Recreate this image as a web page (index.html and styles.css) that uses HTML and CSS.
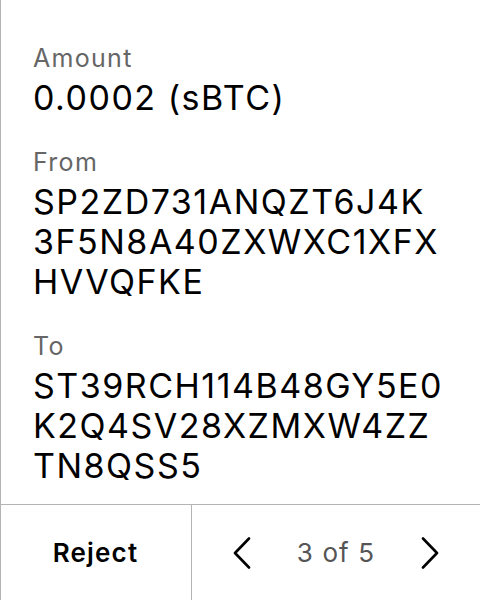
FILE: index.html
```html
<!DOCTYPE html>
<html>
<head>
<meta charset="utf-8">
<link rel="stylesheet" href="styles.css">
</head>
<body>
<div class="screen">
  <div class="content">
    <div class="field">
      <div class="label">Amount</div>
      <div class="value">0.0002 (sBTC)</div>
    </div>
    <div class="field">
      <div class="label">From</div>
      <div class="value">SP2ZD731ANQZT6J4K<br>3F5N8A40ZXWXC1XFX<br>HVVQFKE</div>
    </div>
    <div class="field">
      <div class="label">To</div>
      <div class="value">ST39RCH114B48GY5E0<br>K2Q4SV28XZMXW4ZZ<br>TN8QSS5</div>
    </div>
  </div>
  <div class="footer">
    <div class="reject">Reject</div>
    <div class="pager">
      <svg class="chev" width="18" height="32" viewBox="0 0 18 32"><path d="M16 1.5 L2 16 L16 30.5" fill="none" stroke="#000" stroke-width="2.6" stroke-linecap="round" stroke-linejoin="round"/></svg>
      <span class="count">3 of 5</span>
      <svg class="chev" width="18" height="32" viewBox="0 0 18 32"><path d="M2 1.5 L16 16 L2 30.5" fill="none" stroke="#000" stroke-width="2.6" stroke-linecap="round" stroke-linejoin="round"/></svg>
    </div>
  </div>
</div>
</body>
</html>
```

FILE: styles.css
```css
html, body {
  margin: 0;
  padding: 0;
  background: #fff;
}
body {
  font-family: Inter, "Noto Sans", sans-serif;
  color: #000;
}
.screen {
  width: 480px;
  height: 600px;
  display: flex;
  flex-direction: column;
  border-left: 1px solid #b4b4b4;
  box-sizing: border-box;
}
.content {
  flex: 1;
  padding: 42px 0 0 32px;
  display: flex;
  flex-direction: column;
  gap: 28px;
}
.field {
  display: flex;
  flex-direction: column;
  gap: 4px;
}
.label {
  font-size: 25px;
  line-height: 32px;
  letter-spacing: 1.3px;
  color: #666;
}
.value {
  font-size: 34px;
  line-height: 40px;
  letter-spacing: 1.5px;
}
.footer {
  height: 95px;
  border-top: 1px solid #b4b4b4;
  display: flex;
  margin-left: -1px;
}
.reject {
  width: 191px;
  border-right: 1px solid #b4b4b4;
  display: flex;
  align-items: center;
  justify-content: center;
  font-size: 26px;
  font-weight: 600;
  letter-spacing: 1.2px;
}
.pager {
  flex: 1;
  display: flex;
  align-items: center;
  justify-content: center;
  gap: 46px;
}
.count {
  font-size: 26px;
  letter-spacing: 1.1px;
  color: #555;
}
.chev {
  display: block;
}
```
